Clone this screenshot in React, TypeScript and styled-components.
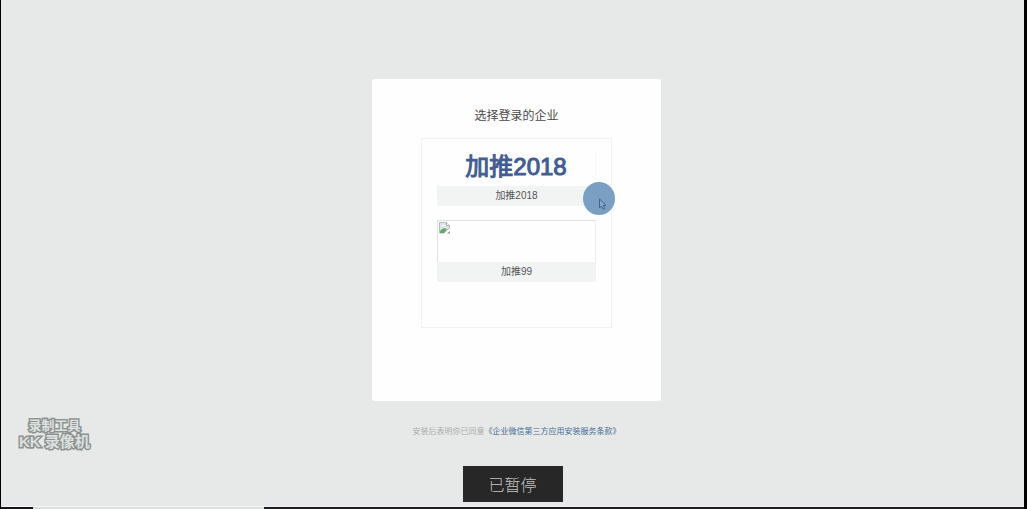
import React from "react";
import styled, { createGlobalStyle } from "styled-components";

const GlobalStyle = createGlobalStyle`
  * { box-sizing: border-box; }
  body { margin: 0; background: #e7e9e8; }
  button { font: inherit; color: inherit; }
`;

const Screen = styled.div`
  position: relative;
  display: flex;
  flex-direction: column;
  min-height: 100vh;
  border-left: 1px solid #000;
  border-right: 3px solid #000;
  background: #e7e9e8;
  font-family: "Liberation Sans", "Noto Sans CJK SC", sans-serif;
`;

const Main = styled.main`
  flex: 1;
  display: flex;
  flex-direction: column;
  align-items: center;
  padding: 79px 0 0 8px;
`;

const Card = styled.section`
  width: 289px;
  min-height: 322px;
  padding: 27px 49px 72px;
  background: #fdfefd;
  border-radius: 2px;
`;

const Title = styled.h1`
  margin: 0 0 12px;
  font-size: 12px;
  line-height: 20px;
  font-weight: 400;
  text-align: center;
  color: #484848;
`;

const CompanyList = styled.div`
  display: flex;
  flex-direction: column;
  gap: 14px;
  min-height: 190px;
  padding: 12px 15px;
  border: 1px solid #f1f2f2;
`;

const Company = styled.button`
  position: relative;
  display: flex;
  flex-direction: column;
  width: 100%;
  padding: 0;
  border: 0;
  background: none;
  text-align: center;
`;

const Logo = styled.span`
  height: 35px;
  border-right: 1px solid #f6f7f7;
  font-size: 24px;
  line-height: 31px;
  font-weight: 400;
  color: #3f5c93;
  -webkit-text-stroke: 1px #3f5c93;
`;

const MissingLogo = styled.span`
  display: flex;
  height: 42px;
  padding: 1px;
  border: 1px solid #dfe0e0;
  border-right-color: #eff0f0;
  border-bottom: 0;
`;

const Label = styled.span`
  height: 20px;
  background: #f2f3f3;
  border-radius: 0 0 2px 2px;
  font-size: 10px;
  line-height: 20px;
  color: #555;
`;

const ClickSpot = styled.span`
  position: absolute;
  right: -19px;
  bottom: -9px;
  width: 32px;
  height: 33px;
  border-radius: 50%;
  background: #7a9fc3;
`;

const Terms = styled.p`
  margin: 24px 0 0;
  font-size: 8px;
  line-height: 14px;
  color: #a9adad;
`;

const TermsLink = styled.a`
  color: #456b94;
  text-decoration: none;
`;

const Watermark = styled.div`
  position: absolute;
  left: 18px;
  bottom: 59px;
  text-align: center;
  font-weight: 700;
  color: #dde0df;
  paint-order: stroke fill;
  -webkit-text-stroke: 3px #8c9391;
`;

const WatermarkLine = styled.div<{ $large?: boolean }>`
  font-size: ${(p) => (p.$large ? 15 : 13)}px;
  line-height: 16px;
`;

const Status = styled.div`
  position: absolute;
  left: 50%;
  bottom: 7px;
  width: 100px;
  margin-left: -50px;
  background: #272727;
  color: #c4c4c4;
  font-family: "Noto Sans CJK SC", sans-serif;
  font-size: 16px;
  font-weight: 300;
  line-height: 36px;
  text-align: center;
`;

const ProgressBar = styled.div`
  display: flex;
  height: 3px;
  border-top: 1px solid #f3f4f4;
`;

const Segment = styled.div<{ $color: string; $width?: string }>`
  flex: ${(p) => (p.$width ? `0 0 ${p.$width}` : "1")};
  background: ${(p) => p.$color};
`;

const BrokenImage = () => (
  <svg width="12" height="13" viewBox="0 0 12 13" aria-hidden="true">
    <path d="M.5 .5h7l3 3v3L8 8l-3 3H.5z" fill="#dce4ec" stroke="#b5babe" />
    <path d="M7.500 .5v3h3" fill="#fff" stroke="#a5abb0" />
    <path d="M2 4q1-2 3-1 2-1 2 1z" fill="#fff" />
    <path d="M1 11V9q3-4 7-2L5 11z" fill="#62a85e" />
    <path d="M8 11.500l3-2.500v2.500z" fill="#8d9290" />
  </svg>
);

const Pointer = () => (
  <svg width="32" height="33" viewBox="0 0 32 33" aria-hidden="true">
    <path
      d="M16.500 17v9l2-2 1.500 3.300 1.700-.8-1.400-3.100h2.700z"
      fill="#86a8c8"
      stroke="#42648a"
      strokeWidth="1"
    />
  </svg>
);

export default function App() {
  return (
    <>
      <GlobalStyle />
      <Screen>
        <Main>
          <Card>
            <Title>选择登录的企业</Title>
            <CompanyList>
              <Company type="button">
                <Logo>加推2018</Logo>
                <Label>加推2018</Label>
                <ClickSpot>
                  <Pointer />
                </ClickSpot>
              </Company>
              <Company type="button">
                <MissingLogo>
                  <BrokenImage />
                </MissingLogo>
                <Label>加推99</Label>
              </Company>
            </CompanyList>
          </Card>
          <Terms>
            安装后表明你已同意
            <TermsLink href="#terms">《企业微信第三方应用安装服务条款》</TermsLink>
          </Terms>
        </Main>
        <ProgressBar>
          <Segment $color="#161418" $width="32px" />
          <Segment $color="#dcdddd" $width="231px" />
          <Segment $color="#1c1b1f" />
        </ProgressBar>
        <Watermark>
          <WatermarkLine>录制工具</WatermarkLine>
          <WatermarkLine $large>KK 录像机</WatermarkLine>
        </Watermark>
        <Status role="status">已暂停</Status>
      </Screen>
    </>
  );
}
